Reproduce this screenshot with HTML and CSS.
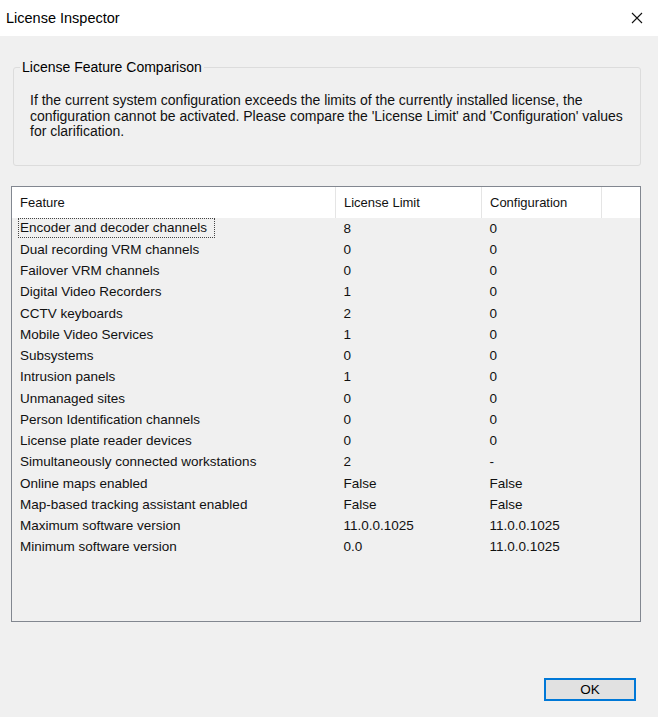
FILE: index.html
```html
<!DOCTYPE html>
<html lang="en">
<head>
  <meta charset="UTF-8" />
  <title>License Inspector</title>
  <link rel="stylesheet" href="styles.css">
</head>
<body>

  <!-- Window title bar -->
  <div class="titlebar">
    <span class="title">License Inspector</span>
    <svg class="close" width="12" height="12" viewBox="0 0 12 12">
      <path d="M1 1 L11 11 M11 1 L1 11" stroke="#111" stroke-width="1.1" fill="none"/>
    </svg>
  </div>

  <div class="dialog">
    <!-- Explanation group box -->
    <fieldset class="group">
      <legend>License Feature Comparison</legend>
      <p class="info">If the current system configuration exceeds the limits of the currently installed license, the configuration cannot be activated. Please compare the 'License Limit' and 'Configuration' values for clarification.</p>
    </fieldset>

    <!-- Feature list view -->
    <div class="listview">
      <table class="features">
        <thead>
          <tr>
            <th class="col-feature">Feature</th>
            <th class="col-limit">License Limit</th>
            <th class="col-config">Configuration</th>
            <th class="col-fill"></th>
          </tr>
        </thead>
        <tbody id="rows"></tbody>
      </table>
    </div>

    <div class="buttons">
      <button class="ok-btn">OK</button>
    </div>
  </div>

  <script>
    // Feature name, license limit, current configuration
    const features = [
      ["Encoder and decoder channels", "8", "0"],
      ["Dual recording VRM channels", "0", "0"],
      ["Failover VRM channels", "0", "0"],
      ["Digital Video Recorders", "1", "0"],
      ["CCTV keyboards", "2", "0"],
      ["Mobile Video Services", "1", "0"],
      ["Subsystems", "0", "0"],
      ["Intrusion panels", "1", "0"],
      ["Unmanaged sites", "0", "0"],
      ["Person Identification channels", "0", "0"],
      ["License plate reader devices", "0", "0"],
      ["Simultaneously connected workstations", "2", "-"],
      ["Online maps enabled", "False", "False"],
      ["Map-based tracking assistant enabled", "False", "False"],
      ["Maximum software version", "11.0.0.1025", "11.0.0.1025"],
      ["Minimum software version", "0.0", "11.0.0.1025"]
    ];

    const tbody = document.getElementById("rows");
    features.forEach((f, i) => {
      const tr = document.createElement("tr");
      // first row carries the keyboard focus rectangle
      const name = i === 0 ? `<span class="focus">${f[0]}</span>` : f[0];
      tr.innerHTML = `<td>${name}</td><td>${f[1]}</td><td>${f[2]}</td><td></td>`;
      tbody.appendChild(tr);
    });
  </script>

</body>
</html>
```

FILE: styles.css
```css
/* Page base */
body {
  margin: 0;
  background: #f0f0f0;
  font-family: "Liberation Sans", Arial, sans-serif;
  font-size: 12px;
  color: #000;
  height: 717px;
  overflow: hidden;
}

/* Title bar */
.titlebar {
  height: 36px;
  background: #fff;
  display: flex;
  align-items: center;
  justify-content: space-between;
  padding: 0 15px 0 6px;
}

.title {
  font-size: 14.5px;
  color: #000;
}

.close {
  display: block;
}

/* Dialog body */
.dialog {
  padding: 0 17px 0 11px;
}

/* Group box */
.group {
  margin: 24px 0 0 2px;
  padding: 0 6px 25px 6px;
  border: 1px solid #dcdcdc;
  border-radius: 3px;
  min-width: 0;
}

.group legend {
  padding: 0 2px;
  font-size: 14px;
  line-height: 14px;
  color: #000;
}

.info {
  margin: 19px 0 0 10px;
  max-width: 600px;
  line-height: 15.5px;
  font-size: 14px;
  color: #111;
}

/* List view */
.listview {
  margin-top: 20px;
  height: 434px;
  border: 1px solid #828790;
  background: #f0f0f0;
}

.features {
  width: 100%;
  border-collapse: collapse;
  table-layout: fixed;
  font-size: 13.5px;
  color: #111;
}

.features th {
  background: #fff;
  height: 31px;
  padding: 0 0 0 8px;
  text-align: left;
  font-weight: normal;
  font-size: 13px;
  border-right: 1px solid #e5e5e5;
}

.features th.col-fill {
  border-right: none;
}

.col-feature { width: 315px; }
.col-limit { width: 137px; }
.col-config { width: 111px; }

.features td {
  height: 21.25px;
  padding: 0 0 0 8px;
  white-space: nowrap;
}

/* Dotted focus rectangle on the selected item */
.focus {
  display: inline-block;
  margin-left: -1px;
  padding: 1px 7px 2px 1px;
  outline: 1px dotted #444;
}

/* Bottom buttons */
.buttons {
  display: flex;
  justify-content: flex-end;
  margin-top: 56px;
  padding-right: 5px;
}

.ok-btn {
  width: 92px;
  height: 23px;
  background: #e1e1e1;
  border: 2px solid #0078d7;
  font-family: "Liberation Sans", Arial, sans-serif;
  font-size: 13.5px;
  color: #000;
  padding: 0;
}
```
